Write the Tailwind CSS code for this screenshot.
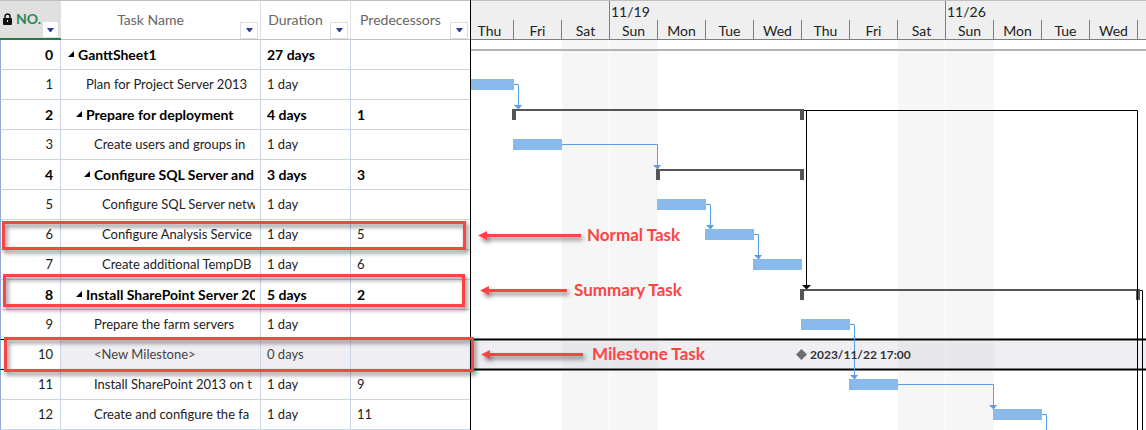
<!DOCTYPE html>
<html lang="en">
<head>
  <meta charset="UTF-8" />
  <meta name="viewport" content="width=device-width, initial-scale=1" />
  <title>GanttSheet1</title>
  <script src="https://cdn.jsdelivr.net/npm/@tailwindcss/browser@4"></script>
</head>
<body class="bg-white text-black text-[14px] font-['Lato',sans-serif] overflow-hidden">

  <main class="relative flex min-h-screen overflow-hidden">

    <!-- Task sheet -->
    <div class="shrink-0 border-r border-black">
      <table class="w-[470px] table-fixed border-separate border-spacing-0">
        <colgroup>
          <col class="w-[61px]" />
          <col class="w-[200px]" />
          <col class="w-[90px]" />
          <col />
        </colgroup>
        <thead>
          <tr id="sheetHead" class="h-10"></tr>
        </thead>
        <tbody id="sheetBody"></tbody>
      </table>
    </div>

    <!-- Chart -->
    <section class="flex-1 min-w-0 overflow-hidden">
      <header class="h-10 overflow-hidden text-[#222] bg-[#efefef] border-t border-t-[#bfbfbf] border-b border-b-[#7f7f7f]">
        <div class="flex h-[19px]">
          <div class="h-10 w-[139px] shrink-0 border-r border-[#7f7f7f]"></div>
          <div class="h-10 w-[336px] shrink-0 border-r border-[#7f7f7f] pl-[1px] leading-[21px]">11/19</div>
          <div class="shrink-0 pl-[1px] leading-[21px]">11/26</div>
        </div>
        <div id="days" class="flex h-[19px] -ml-[5px]"></div>
      </header>

      <svg class="block w-full h-[390px]" role="img" aria-label="Gantt chart">
        <!-- weekends -->
        <g fill="#f6f6f6">
          <rect x="91" y="0" width="47" height="390" />
          <rect x="139" y="0" width="48" height="390" />
          <rect x="427" y="0" width="47" height="390" />
          <rect x="475" y="0" width="48" height="390" />
        </g>
        <rect x="0" y="9" width="100%" height="2" fill="#b3b3b3" />

        <!-- selected row -->
        <rect x="0" y="299" width="100%" height="30" fill="#efeef3" />
        <g fill="#e8e7ec">
          <rect x="91" y="299" width="47" height="30" />
          <rect x="139" y="299" width="48" height="30" />
          <rect x="427" y="299" width="47" height="30" />
          <rect x="475" y="299" width="48" height="30" />
        </g>
        <g fill="#7d7d7d">
          <rect x="0" y="298" width="100%" height="3" />
          <rect x="0" y="328" width="100%" height="3" />
        </g>
        <rect x="0" y="299" width="100%" height="1" fill="#000" />
        <rect x="0" y="329" width="100%" height="1" fill="#000" />

        <!-- tasks -->
        <g fill="#8abaec">
          <rect x="0" y="39" width="43" height="11" />
          <rect x="42" y="99" width="49" height="11" />
          <rect x="186" y="159" width="49" height="11" />
          <rect x="234" y="189" width="49" height="11" />
          <rect x="282" y="219" width="49" height="11" />
          <rect x="330" y="279" width="49" height="11" />
          <rect x="378" y="339" width="49" height="11" />
          <rect x="522" y="369" width="49" height="11" />
        </g>

        <!-- summary brackets -->
        <g fill="#555">
          <path d="M41 69H333V80H329V71H45V80H41Z" />
          <path d="M185 129H333V140H329V131H189V140H185Z" />
          <path d="M329 249H669V260H665V251H333V260H329Z" />
        </g>

        <!-- links -->
        <g fill="none" stroke="#5a9fe3">
          <path d="M43 44.5H47.5V66" />
          <path d="M91 104.5H186.5V126" />
          <path d="M235 164.5H239.5V186" />
          <path d="M283 194.5H287.5V216" />
          <path d="M379 284.5H383.5V336" />
          <path d="M427 344.5H522.5V366" />
          <path d="M571 374.5H575.5V390" />
        </g>
        <g fill="#5a9fe3">
          <path d="M43 65H51L48 69H47Z" />
          <path d="M182 125H190L187 129H186Z" />
          <path d="M235 185H243L240 189H239Z" />
          <path d="M283 215H291L288 219H287Z" />
          <path d="M379 335H387L384 339H383Z" />
          <path d="M518 365H526L523 369H522Z" />
        </g>
        <g fill="none" stroke="#000">
          <path d="M333 70.5H666.5V390" />
          <path d="M335.5 70V246" />
          <path d="M669 250.5H671.5V390" />
        </g>
        <path d="M331 245H340L336 249H335Z" fill="#000" />

        <!-- milestone -->
        <path d="M330.5 309L336 314.5L330.5 320L325 314.5Z" fill="#6e6e72" />
        <text x="339" y="319" class="text-[12px] font-bold" fill="#333">2023/11/22 17:00</text>
      </svg>
    </section>

    <!-- Callouts -->
    <div class="absolute left-[2px] top-[221px] w-[464px] h-[29px] border-3 border-[#fd4444] drop-shadow-[2px_3px_2px_rgba(0,0,0,0.5)]"></div>
    <div class="absolute left-[3px] top-[274px] w-[462px] h-[33px] border-3 border-[#fd4444] drop-shadow-[2px_3px_2px_rgba(0,0,0,0.5)]"></div>
    <div class="absolute left-[4px] top-[337px] w-[470px] h-[35px] border-3 border-[#fd4444] drop-shadow-[2px_3px_2px_rgba(0,0,0,0.5)]"></div>
    <svg class="absolute left-0 top-0 w-full h-[430px] pointer-events-none">
      <g fill="#fd4444" class="drop-shadow-[2px_3px_2px_rgba(0,0,0,0.5)]">
        <path d="M478 235.5L487 231V234H581V237H487V240Z" />
        <path d="M480 290.5L489 286V289H567V292H489V295Z" />
        <path d="M481 354.5L490 350V353H583V356H490V359Z" />
      </g>
      <g fill="#fd4444" class="text-[17px] font-bold">
        <text x="587" y="241">Normal Task</text>
        <text x="574" y="296">Summary Task</text>
        <text x="592" y="360">Milestone Task</text>
      </g>
    </svg>
  </main>

  <script>
    const columns = ['NO.', 'Task Name', 'Duration', 'Predecessors'];

    // no, name, level, duration, predecessors, summary
    const tasks = [
      [0, 'GanttSheet1', 0, '27 days', '', true],
      [1, 'Plan for Project Server 2013', 1, '1 day', ''],
      [2, 'Prepare for deployment', 1, '4 days', '1', true],
      [3, 'Create users and groups in', 2, '1 day', ''],
      [4, 'Configure SQL Server and A', 2, '3 days', '3', true],
      [5, 'Configure SQL Server netw', 3, '1 day', ''],
      [6, 'Configure Analysis Service', 3, '1 day', '5'],
      [7, 'Create additional TempDB', 3, '1 day', '6'],
      [8, 'Install SharePoint Server 201', 1, '5 days', '2', true],
      [9, 'Prepare the farm servers', 2, '1 day', ''],
      [10, '&lt;New Milestone&gt;', 2, '0 days', ''],
      [11, 'Install SharePoint 2013 on t', 2, '1 day', '9'],
      [12, 'Create and configure the fa', 2, '1 day', '11'],
    ];
    const indent = ['pl-[17px]', 'pl-[25px]', 'pl-[33px]', 'pl-[41px]'];
    const dayNames = ['Thu', 'Fri', 'Sat', 'Sun', 'Mon', 'Tue', 'Wed'];

    const lock = `<svg class="w-[9px] h-3 shrink-0" viewBox="0 0 9 12" aria-hidden="true">
      <path d="M2 6V3.5a2.5 2.5 0 0 1 5 0V6" fill="none" stroke="#111" stroke-width="1.5" />
      <rect x="0" y="5" width="9" height="7" rx="1" fill="#111" />
      <rect x="4" y="7" width="1" height="2" fill="#ddd" /></svg>`;

    document.getElementById('sheetHead').innerHTML = columns.map((name, i) => `
      <th class="h-10 p-0 border-t border-t-[#bfbfbf] font-normal ${i === 0
        ? 'bg-[#e0e0e0] border-b-2 border-b-[#1e7e45]'
        : 'border-b border-b-[#bfc4bf] text-[#666]'} ${i > 0 && i < 3 ? 'border-r border-r-[#dcdfe4]' : ''}">
        <div class="flex h-[37px] items-end pr-[2px] ${i === 0 ? 'pl-[2px]' : ''}">
          <span class="flex flex-1 h-full items-center justify-center gap-1 pb-[2px] ${i === 0 ? 'text-[#2e8555] font-bold' : ''}">${i === 0 ? lock : ''}${name}</span>
          <button aria-label="Filter ${name}" class="flex shrink-0 items-center justify-center bg-white border border-[#dedede] h-[17px] ${i === 0 ? 'w-[17px]' : 'w-[18px]'}">
            <svg class="w-[7px] h-1" viewBox="0 0 7 4" aria-hidden="true"><path d="M0 0H7L4 4H3Z" fill="#2c3f8c" /></svg>
          </button>
        </div>
      </th>`).join('');

    document.getElementById('sheetBody').innerHTML = tasks.map(([no, name, level, duration, pred, summary]) => {
      const selected = no === 10;
      const line = selected || no === 9 ? 'border-b-black' : 'border-b-[#c9d5e4]';
      const cell = `h-[30px] p-0 border-b ${line}`;
      const fill = selected ? 'bg-[#efeef3] text-[#444]' : '';
      return `
      <tr class="${summary ? 'font-bold' : 'text-[13px] text-[#222]'}">
        <td class="${cell} border-l border-l-[#8eaad3] border-r border-r-[#c9d5e4] pr-[7px] text-right">${no}</td>
        <td class="${cell} ${fill} border-r border-r-[#c9d5e4] pr-[5px]">
          <div class="overflow-hidden whitespace-nowrap ${indent[level]}">
            ${summary ? '<svg class="inline-block w-[6px] h-[6px] -ml-[10px] mr-1 mb-1" viewBox="0 0 6 6" aria-hidden="true"><path d="M6 0V6H0Z" /></svg>' : ''}${name}
          </div>
        </td>
        <td class="${cell} ${fill} border-r border-r-[#c9d5e4] pl-[6px]">${duration}</td>
        <td class="${cell} ${fill} pl-[6px]">${pred}</td>
      </tr>`;
    }).join('');

    document.getElementById('days').innerHTML = Array.from({ length: 15 }, (_, i) =>
      `<div class="w-12 shrink-0 border-r border-[#7f7f7f] text-center leading-[22px]">${i < 14 ? dayNames[i % 7] : ''}</div>`
    ).join('');
  </script>
</body>
</html>
